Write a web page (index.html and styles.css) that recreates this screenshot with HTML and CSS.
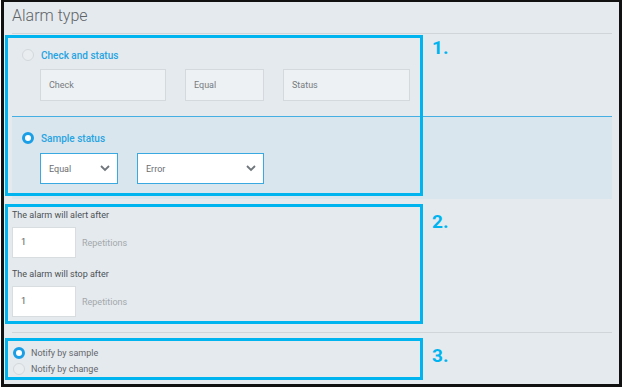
FILE: index.html
```html
<!DOCTYPE html>
<html lang="en">
<head>
    <meta charset="UTF-8">
    <meta name="viewport" content="width=device-width, initial-scale=1.0">
    <title>Alarm type</title>
    <link rel="stylesheet" href="styles.css">
</head>
<body>
    <div class="frame">
        <div class="content">
            <h1 class="title">Alarm type</h1>

            <section class="type-check">
                <div class="radio-row">
                    <span class="radio"></span>
                    <span class="type-label">Check and status</span>
                </div>
                <div class="field-row">
                    <div class="field field-check">Check</div>
                    <div class="field field-equal">Equal</div>
                    <div class="field field-status">Status</div>
                </div>
            </section>

            <section class="type-sample">
                <div class="radio-row">
                    <span class="radio checked"></span>
                    <span class="type-label">Sample status</span>
                </div>
                <div class="field-row">
                    <div class="select select-equal">
                        <span>Equal</span>
                        <svg width="10" height="7" viewBox="0 0 10 7"><polyline points="1,1 5,5 9,1" fill="none" stroke="#6f767c" stroke-width="1.8"/></svg>
                    </div>
                    <div class="select select-error">
                        <span>Error</span>
                        <svg width="10" height="7" viewBox="0 0 10 7"><polyline points="1,1 5,5 9,1" fill="none" stroke="#6f767c" stroke-width="1.8"/></svg>
                    </div>
                </div>
            </section>

            <section class="repeats">
                <div class="repeat-label">The alarm will alert after</div>
                <div class="repeat-row">
                    <div class="count">1</div>
                    <span class="unit">Repetitions</span>
                </div>
                <div class="repeat-label second">The alarm will stop after</div>
                <div class="repeat-row">
                    <div class="count">1</div>
                    <span class="unit">Repetitions</span>
                </div>
            </section>

            <section class="notify">
                <div class="notify-row">
                    <span class="radio checked"></span>
                    <span class="notify-label">Notify by sample</span>
                </div>
                <div class="notify-row">
                    <span class="radio"></span>
                    <span class="notify-label">Notify by change</span>
                </div>
            </section>
        </div>

        <!-- annotations -->
        <div class="mark mark-1"></div>
        <div class="mark mark-2"></div>
        <div class="mark mark-3"></div>
        <span class="mark-num num-1">1.</span>
        <span class="mark-num num-2">2.</span>
        <span class="mark-num num-3">3.</span>
    </div>
</body>
</html>
```

FILE: styles.css
```css
body {
    margin: 0;
    background-color: #ffffff;
    font-family: Roboto, "Noto Sans", sans-serif;
}
.frame {
    position: relative;
    margin-left: 1px;
    width: 621px;
    height: 387px;
    box-sizing: border-box;
    border: 3px solid #111111;
    border-top-width: 2px;
    background-color: #e5eaee;
}
.content {
    padding: 0 7px 0 8px;
}
.title {
    margin: 0;
    height: 31px;
    line-height: 28px;
    font-size: 16px;
    font-weight: 300;
    color: #5f6468;
    border-bottom: 1px solid #d0d5d9;
}
.radio {
    display: inline-block;
    width: 12px;
    height: 12px;
    box-sizing: border-box;
    border-radius: 50%;
    border: 1px solid #d3d8dc;
    background-color: #e9edf0;
}
.radio.checked {
    border: 3px solid #1a9fe6;
    background-color: #ffffff;
}
.radio-row {
    display: flex;
    align-items: center;
    gap: 7px;
    height: 12px;
    padding-left: 10px;
}
.type-label {
    font-size: 10px;
    font-weight: 500;
    color: #27a4e2;
}
.field-row {
    display: flex;
    gap: 19px;
    margin-top: 8px;
    padding-left: 28px;
}
.type-check {
    padding: 15px 0 15px 0;
}
.field {
    height: 32px;
    box-sizing: border-box;
    border: 1px solid #d4d9dd;
    background-color: #edf1f3;
    padding-left: 8px;
    font-size: 9px;
    line-height: 30px;
    color: #777b7f;
}
.field-check { width: 126px; }
.field-equal { width: 79px; }
.field-status { width: 127px; }
.type-sample {
    background-color: #d9e6ee;
    border-top: 1px solid #45aee3;
    padding: 15px 0 15px 0;
}
.type-sample .field-row {
    margin-top: 9px;
}
.select {
    display: flex;
    align-items: center;
    justify-content: space-between;
    height: 31px;
    box-sizing: border-box;
    border: 1px solid #3aa9e2;
    background-color: #ffffff;
    padding: 0 7px 0 8px;
    font-size: 9px;
    color: #6a6e72;
}
.select-equal { width: 78px; }
.select-error { width: 127px; }
.repeats {
    padding: 10px 0 15px 0;
}
.repeat-label {
    height: 12px;
    line-height: 12px;
    font-size: 9px;
    color: #4c5155;
}
.repeat-label.second {
    margin-top: 10px;
}
.repeat-row {
    display: flex;
    align-items: center;
    gap: 6px;
    margin-top: 6px;
}
.count {
    width: 64px;
    height: 31px;
    box-sizing: border-box;
    border: 1px solid #d8dde0;
    background-color: #ffffff;
    padding-left: 8px;
    font-size: 9px;
    line-height: 29px;
    color: #555a5e;
}
.unit {
    font-size: 9px;
    color: #a3a8ac;
}
.notify {
    border-top: 1px solid #d0d5d9;
    padding-top: 14px;
    display: flex;
    flex-direction: column;
    gap: 4px;
}
.notify-row {
    display: flex;
    align-items: center;
    gap: 6px;
    height: 12px;
    padding-left: 1px;
}
.notify-label {
    font-size: 9px;
    color: #64686c;
}
.mark {
    position: absolute;
    left: 1px;
    width: 418px;
    box-sizing: border-box;
    border: 3px solid #00b4f0;
}
.mark-1 { top: 33px; height: 161px; }
.mark-2 { top: 202px; height: 120px; }
.mark-3 { top: 336px; height: 42px; }
.mark-num {
    position: absolute;
    left: 428px;
    font-size: 19px;
    line-height: 20px;
    font-weight: 700;
    color: #00b4f0;
}
.num-1 { top: 36px; }
.num-2 { top: 210px; }
.num-3 { top: 344px; }
```
